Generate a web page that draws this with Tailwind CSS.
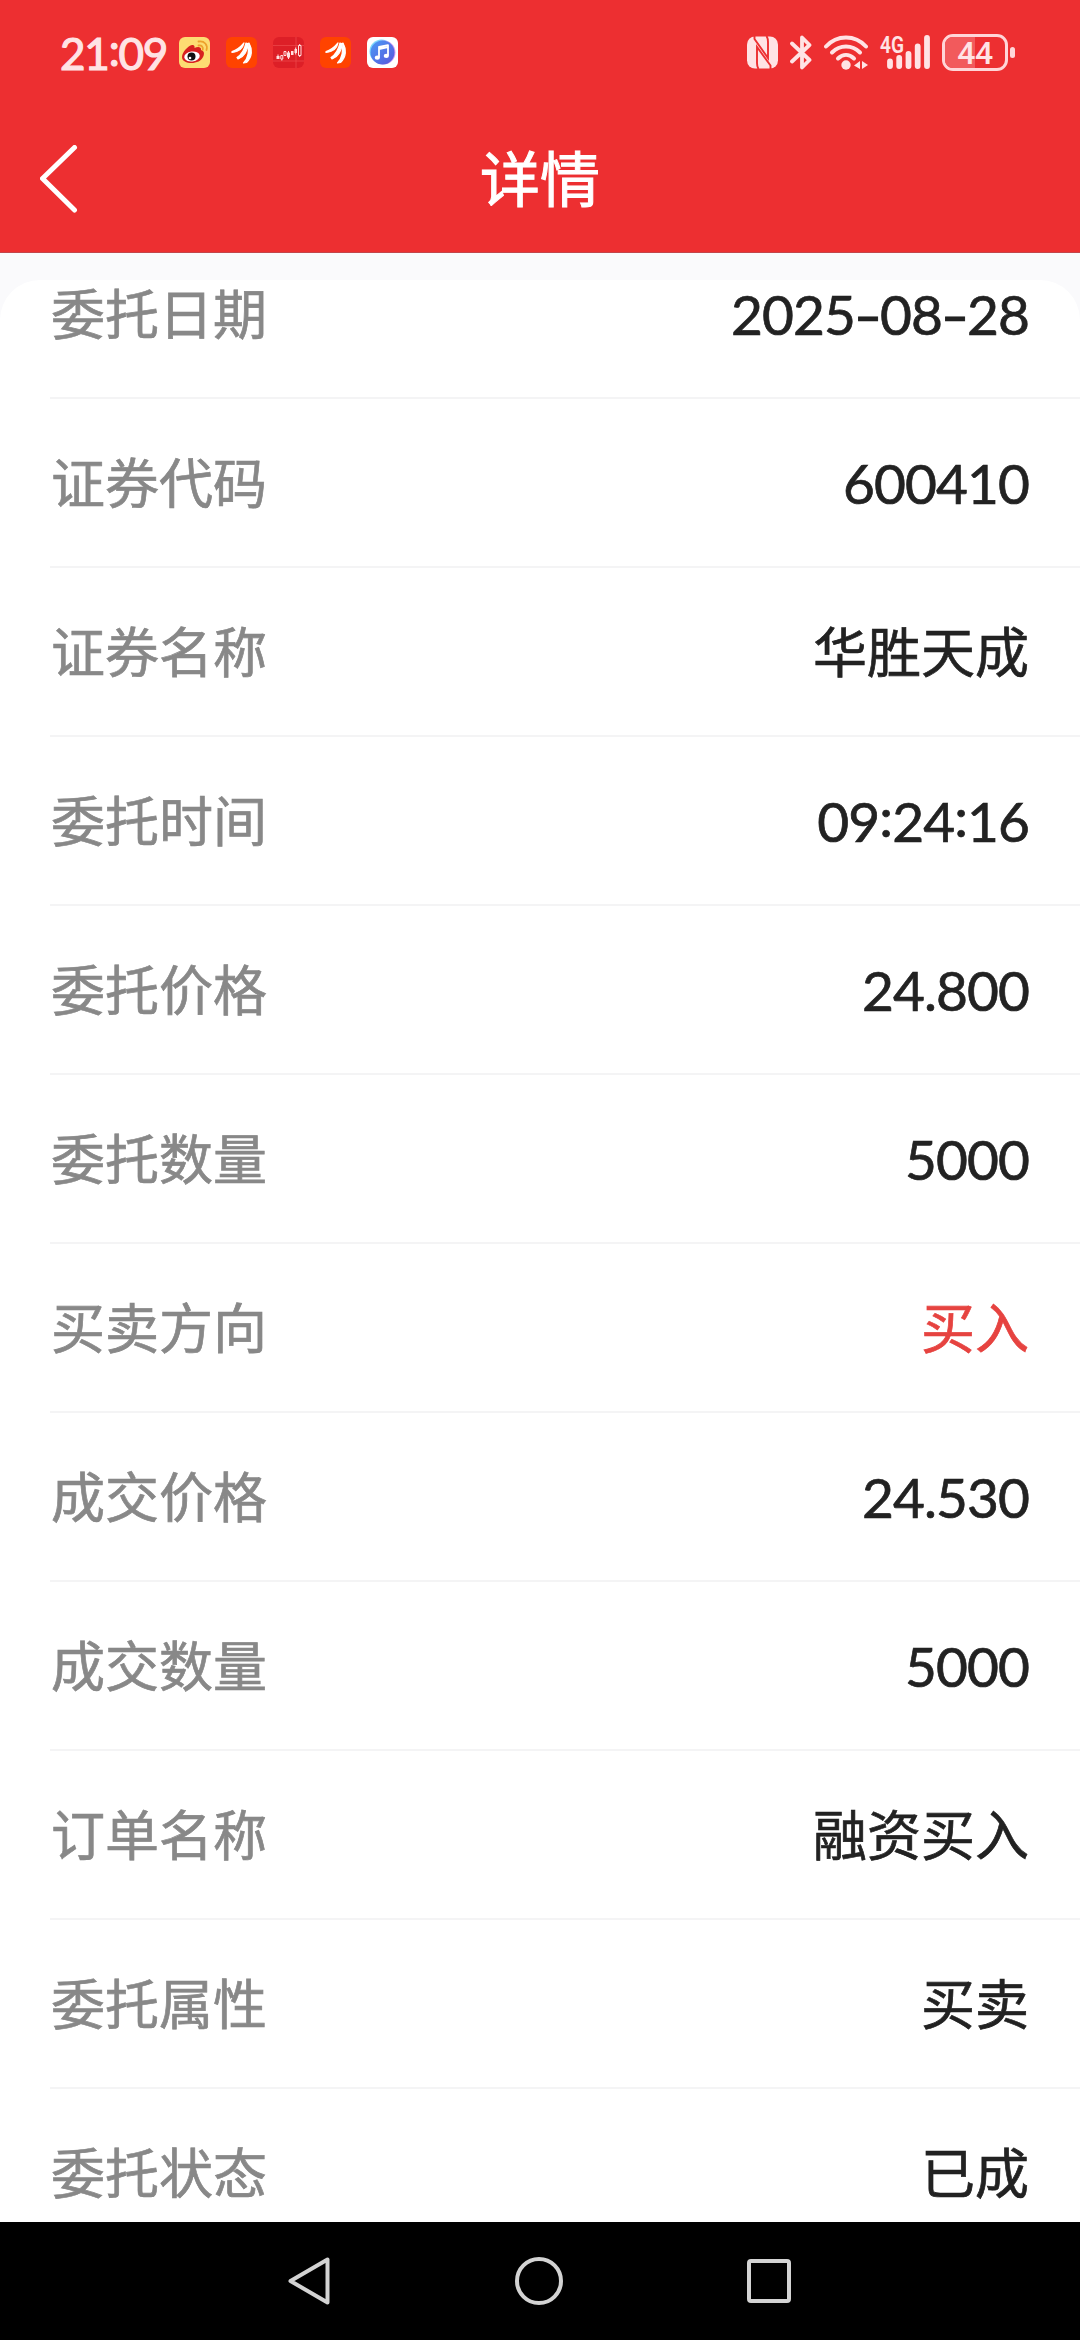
<!DOCTYPE html>
<html lang="zh-CN">
<head>
  <meta charset="UTF-8" />
  <meta name="viewport" content="width=device-width, initial-scale=1.0"/>
  <title>详情</title>
  <script src="https://cdn.jsdelivr.net/npm/@tailwindcss/browser@4"></script>
</head>
<body class="bg-[#fafafc] font-['Lato','Noto_Sans_CJK_SC',sans-serif] w-[1080px] h-[2340px] flex flex-col overflow-hidden">

  <header class="bg-[#ed2f31] h-[253px] shrink-0 border-b border-[#c2464b]">

    <!-- Status bar -->
    <div class="h-[105px] pl-[60px] pr-[65px] flex justify-between items-center">
      <div class="flex items-center gap-4">
        <div class="w-[103px] text-[44px] leading-none text-[#ffe3e5] tracking-[-1.2px] whitespace-nowrap [-webkit-text-stroke:1.2px_#ffe3e5]">21<span class="relative -top-[4px]">:</span>09</div>

        <!-- Weibo -->
        <svg class="w-[31px] h-[31px]" viewBox="0 0 31 31">
          <rect width="31" height="31" rx="6" fill="#fddc72"/>
          <path d="M3 20c0-5 6-11 10-12 2-.5 3 1 2.500 3 3-1.500 7-1.500 6.500 2 3 1 3.500 3 2.500 6-2 5-7 7-12 7s-9.500-2-9.500-6z" fill="#d8201f"/>
          <ellipse cx="13" cy="19.500" rx="7.800" ry="5" fill="#fff" transform="rotate(-8 13 19.500)"/>
          <circle cx="12.500" cy="19.500" r="4" fill="#111"/>
          <circle cx="11" cy="21" r="1.300" fill="#fff"/>
          <path d="M19.500 8.500c3-.6 5 1.500 4.200 4.300M19.500 4.500c6-1 9.500 3.500 8 8.500" fill="none" stroke="#eda12c" stroke-width="1.800" stroke-linecap="round"/>
        </svg>

        <!-- Broker app -->
        <svg class="w-[31px] h-[31px]" viewBox="0 0 31 31">
          <rect width="31" height="31" rx="6" fill="#ff4300"/>
          <path d="M6 14.500c6-1.500 9-5 12-8.500-1 5-5 9-12 9.500zM11 20.500c5-3 7.500-8 9-14.500l1.500.5c.5 7-3 13-9.500 15.500zM17.500 26c4-4 6-11 4.500-19.500l1-.5c3.500 6 3.500 14-2.500 19.500z" fill="#fff" stroke="#fff" stroke-width="1.200" stroke-linejoin="round"/>
        </svg>

        <!-- Candlestick app -->
        <svg class="w-[31px] h-[31px]" viewBox="0 0 31 31">
          <rect width="31" height="31" rx="6" fill="#dd1f27"/>
          <path d="M0 8.500h31M23 0v31M0 24h31" stroke="#ee4a4d" stroke-width=".7"/>
          <path d="M3.500 19h3v3h-3zM14 15.500h3v5h-3zM18 14h2.500v4H18zM21.500 12h2.500v4h-2.500z" fill="#ffdfe0"/>
          <path d="M7.800 18.500h2v3.500h-2zM11 14.500h2v4h-2zM25.500 8.500h2.500v10h-2.500zM5 17.500v1.500M8.800 22v1.500M15.500 14v8M22.700 10.500v7M26.700 7v1.500M26.700 18.500v1.500" fill="none" stroke="#ffdfe0" stroke-width="1"/>
        </svg>

        <!-- Broker app -->
        <svg class="w-[31px] h-[31px]" viewBox="0 0 31 31">
          <rect width="31" height="31" rx="6" fill="#ff4300"/>
          <path d="M6 14.500c6-1.500 9-5 12-8.500-1 5-5 9-12 9.500zM11 20.500c5-3 7.500-8 9-14.500l1.500.5c.5 7-3 13-9.500 15.500zM17.500 26c4-4 6-11 4.500-19.500l1-.5c3.500 6 3.500 14-2.500 19.500z" fill="#fff" stroke="#fff" stroke-width="1.200" stroke-linejoin="round"/>
        </svg>

        <!-- Music -->
        <svg class="w-[31px] h-[31px]" viewBox="0 0 31 31">
          <defs>
            <linearGradient id="music" x1="0" y1="0" x2="1" y2="1">
              <stop offset="0" stop-color="#4a9bf5"/>
              <stop offset="1" stop-color="#5a55dc"/>
            </linearGradient>
          </defs>
          <rect width="31" height="31" rx="6" fill="#fff"/>
          <circle cx="14.500" cy="14.500" r="12" fill="#7fd8fa"/>
          <circle cx="16.500" cy="15.500" r="12" fill="#d79bf5"/>
          <circle cx="15.500" cy="15.500" r="12" fill="url(#music)"/>
          <path d="M12 20.500V10l9-1.800v10.500M12 12l9-1.800" fill="none" stroke="#fff" stroke-width="1.800" stroke-linejoin="round"/>
          <ellipse cx="10.300" cy="20.700" rx="2.600" ry="2.100" fill="#fff"/>
          <ellipse cx="19.300" cy="18.900" rx="2.600" ry="2.100" fill="#fff"/>
        </svg>
      </div>

      <div class="flex items-center gap-3">
        <!-- NFC -->
        <svg class="w-[31px] h-[33px]" viewBox="0 0 31 33">
          <rect y=".5" width="31" height="32" rx="8" fill="#ffe3e5"/>
          <path d="M7.500 0v3L21 22V6c0-3-.5-4.500-1.500-6M23.500 33v-3.500L10 11v16c0 3 .5 4.500 1.500 6" fill="none" stroke="#ed2f31" stroke-width="1.900"/>
        </svg>

        <!-- Bluetooth -->
        <svg class="w-[22px] h-[35px]" viewBox="0 0 22 35">
          <path d="M2 8.500L19.500 25 12 32.500V2.500L19.500 10 2 26.500" fill="none" stroke="#ffe3e5" stroke-width="3.800" stroke-linecap="round" stroke-linejoin="round"/>
        </svg>

        <!-- Wi-Fi -->
        <svg class="w-[44px] h-[35px]" viewBox="0 0 44 35">
          <g fill="none" stroke="#ffe3e5" stroke-width="4" stroke-linecap="round">
            <path d="M2 11.500C13 -.500 31 -.500 42 11.500"/>
            <path d="M8 17.500c8-8 20-8 28 0"/>
            <path d="M14 23.500c5-4.800 11-4.800 16 0"/>
          </g>
          <circle cx="22" cy="30" r="4.700" fill="#ffe3e5"/>
          <path d="M36 26v8l-6-3.500zM38 26v8l6-4z" fill="#ffe3e5"/>
        </svg>

        <!-- Mobile signal -->
        <svg class="w-[50px] h-[35px] overflow-visible" viewBox="0 0 50 35">
          <text x="0" y="17.500" textLength="24" lengthAdjust="spacingAndGlyphs" font-family="Roboto" font-size="23" font-weight="600" fill="#ffe3e5">4G</text>
          <path d="M10 26.500v4.500M19.200 23v8M28.500 19v12M37.700 11.500v19.500M47 3v28" stroke="#ffe3e5" stroke-width="5.800" stroke-linecap="round"/>
        </svg>

        <!-- Battery -->
        <div class="flex items-center gap-[2px]">
          <div class="relative w-[66px] h-[37px] rounded-[11px] border-3 border-[#ffd6d8] overflow-hidden">
            <div class="w-[30px] h-full bg-[#f25a5c]"></div>
            <div class="absolute inset-0 flex items-center justify-center font-['Roboto'] text-[32px] leading-none font-medium tracking-[-0.5px] text-[#ffe3e5]">44</div>
          </div>
          <div class="w-[5px] h-[11px] rounded-sm bg-[#ffd6d8]"></div>
        </div>
      </div>
    </div>

    <!-- Title bar -->
    <div class="h-[147px] px-10 grid grid-cols-3 items-center">
      <svg class="w-[38px] h-[68px]" viewBox="0 0 38 68">
        <path d="M34.500 2.500L2.500 33.500l32 31.500" fill="none" stroke="#fff" stroke-width="5" stroke-linecap="round" stroke-linejoin="round"/>
      </svg>
      <h1 class="text-center text-[60px] leading-none text-white [-webkit-text-stroke:1px_#fff]">详情</h1>
    </div>
  </header>

  <!-- Order detail, scrolled a little past the first row -->
  <main class="flex-1 min-h-0 mt-[27px] bg-white rounded-t-[40px] overflow-hidden text-[54px] leading-none text-[#222] [-webkit-text-stroke:0.7px]">
    <dl class="-mt-[50px] ml-[50px]">
      <div class="h-[169px] pt-[2px] pl-px pr-[51px] flex justify-between items-center border-b-2 border-[#f4f4f5]">
        <dt class="text-[#888]">委托日期</dt>
        <dd class="text-[55px] tracking-[-0.9px]">2025<span class="inline-block w-[25px] text-center scale-x-140">-</span>08<span class="inline-block w-[25px] text-center scale-x-140">-</span>28</dd>
      </div>
      <div class="h-[169px] pt-[2px] pl-px pr-[51px] flex justify-between items-center border-b-2 border-[#f4f4f5]">
        <dt class="text-[#888]">证券代码</dt>
        <dd class="text-[55px] tracking-[-0.9px]">600410</dd>
      </div>
      <div class="h-[169px] pt-[2px] pl-px pr-[51px] flex justify-between items-center border-b-2 border-[#f4f4f5]">
        <dt class="text-[#888]">证券名称</dt>
        <dd>华胜天成</dd>
      </div>
      <div class="h-[169px] pt-[2px] pl-px pr-[51px] flex justify-between items-center border-b-2 border-[#f4f4f5]">
        <dt class="text-[#888]">委托时间</dt>
        <dd class="text-[55px] tracking-[-0.9px]">09<span class="relative -top-[5px]">:</span>24<span class="relative -top-[5px]">:</span>16</dd>
      </div>
      <div class="h-[169px] pt-[2px] pl-px pr-[51px] flex justify-between items-center border-b-2 border-[#f4f4f5]">
        <dt class="text-[#888]">委托价格</dt>
        <dd class="text-[55px] tracking-[-0.9px]">24.800</dd>
      </div>
      <div class="h-[169px] pt-[2px] pl-px pr-[51px] flex justify-between items-center border-b-2 border-[#f4f4f5]">
        <dt class="text-[#888]">委托数量</dt>
        <dd class="text-[55px] tracking-[-0.9px]">5000</dd>
      </div>
      <div class="h-[169px] pt-[2px] pl-px pr-[51px] flex justify-between items-center border-b-2 border-[#f4f4f5]">
        <dt class="text-[#888]">买卖方向</dt>
        <dd class="text-[#e64340]">买入</dd>
      </div>
      <div class="h-[169px] pt-[2px] pl-px pr-[51px] flex justify-between items-center border-b-2 border-[#f4f4f5]">
        <dt class="text-[#888]">成交价格</dt>
        <dd class="text-[55px] tracking-[-0.9px]">24.530</dd>
      </div>
      <div class="h-[169px] pt-[2px] pl-px pr-[51px] flex justify-between items-center border-b-2 border-[#f4f4f5]">
        <dt class="text-[#888]">成交数量</dt>
        <dd class="text-[55px] tracking-[-0.9px]">5000</dd>
      </div>
      <div class="h-[169px] pt-[2px] pl-px pr-[51px] flex justify-between items-center border-b-2 border-[#f4f4f5]">
        <dt class="text-[#888]">订单名称</dt>
        <dd>融资买入</dd>
      </div>
      <div class="h-[169px] pt-[2px] pl-px pr-[51px] flex justify-between items-center border-b-2 border-[#f4f4f5]">
        <dt class="text-[#888]">委托属性</dt>
        <dd>买卖</dd>
      </div>
      <div class="h-[169px] pt-[2px] pl-px pr-[51px] flex justify-between items-center border-b-2 border-[#f4f4f5]">
        <dt class="text-[#888]">委托状态</dt>
        <dd>已成</dd>
      </div>
    </dl>
  </main>

  <!-- System navigation -->
  <nav class="h-[118px] shrink-0 bg-black pl-[288px] pr-[289px] flex justify-between items-center">
    <svg class="w-[43px] h-[48px]" viewBox="0 0 43 48">
      <path d="M39.500 2.500v43L2.500 24z" fill="none" stroke="#d3d3d3" stroke-width="4" stroke-linejoin="round"/>
    </svg>
    <svg class="w-[48px] h-[48px]" viewBox="0 0 48 48">
      <circle cx="24" cy="24" r="22" fill="none" stroke="#d3d3d3" stroke-width="4"/>
    </svg>
    <svg class="w-[44px] h-[44px]" viewBox="0 0 44 44">
      <rect x="2" y="2" width="40" height="40" rx="2" fill="none" stroke="#d3d3d3" stroke-width="4"/>
    </svg>
  </nav>

</body>
</html>
